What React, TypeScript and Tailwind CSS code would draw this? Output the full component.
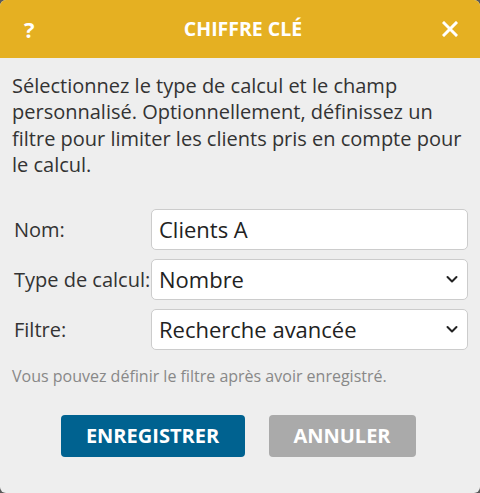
import React from 'react';

const ChevronDown: React.FC = () => (
  <svg width="14" height="14" viewBox="0 0 14 14" fill="none" className="text-[#222]">
    <path d="M2.5 5 L7 9.5 L11.5 5" stroke="currentColor" strokeWidth="2" strokeLinecap="round" strokeLinejoin="round" />
  </svg>
);

const fields = [
  { label: 'Nom:', value: 'Clients A', select: false },
  { label: 'Type de calcul:', value: 'Nombre', select: true },
  { label: 'Filtre:', value: 'Recherche avancée', select: true },
];

const App: React.FC = () => {
  return (
    <div className="w-[480px] h-[493px] bg-[#5a5a5a] font-['Open_Sans',sans-serif]">
      <div className="w-full h-full bg-[#eeeeee] rounded-[6px] overflow-hidden flex flex-col">
        {/* Header */}
        <div className="h-[58px] bg-[#e5b022] flex items-center justify-between px-[24px] text-white">
          <span className="text-[22px] font-bold w-[20px]">?</span>
          <span className="text-[19.5px] font-bold">CHIFFRE CLÉ</span>
          <svg width="16" height="16" viewBox="0 0 16 16" className="mr-[-2px]">
            <path d="M2 2 L14 14 M14 2 L2 14" stroke="white" strokeWidth="3" strokeLinecap="square" />
          </svg>
        </div>

        {/* Body */}
        <div className="px-[12px] pt-[15px]">
          <p className="text-[20px] leading-[26.4px] text-[#333]">
            Sélectionnez le type de calcul et le champ personnalisé. Optionnellement, définissez un filtre pour limiter les clients pris en compte pour le calcul.
          </p>

          <div className="mt-[30px] flex flex-col gap-[9px]">
            {fields.map((f) => (
              <div key={f.label} className="flex items-start">
                <span className="w-[139px] pl-[2px] pt-[6px] text-[20px] text-[#333] whitespace-nowrap">{f.label}</span>
                <div className="flex-1 h-[41px] bg-white border border-[#cccccc] rounded-[5px] flex items-center justify-between pl-[7px] pr-[8px]">
                  <span className="text-[22px] text-[#222]">{f.value}</span>
                  {f.select && <ChevronDown />}
                </div>
              </div>
            ))}
          </div>

          <p className="mt-[14px] text-[16px] text-[#888]">Vous pouvez définir le filtre après avoir enregistré.</p>

          <div className="mt-[27px] flex justify-center gap-[24px] pr-[4px]">
            <button className="w-[184px] h-[42px] rounded-[4px] bg-[#006290] text-white text-[20px] font-bold">ENREGISTRER</button>
            <button className="w-[147px] h-[42px] rounded-[4px] bg-[#aaaaaa] text-white text-[20px] font-bold">ANNULER</button>
          </div>
        </div>
      </div>
    </div>
  );
};

export default App;
